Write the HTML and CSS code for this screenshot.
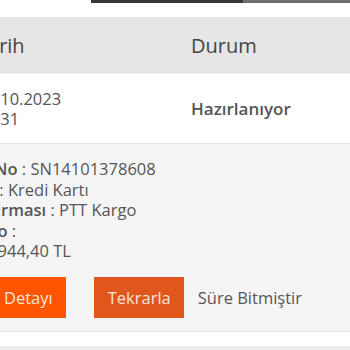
FILE: index.html
```html
<!DOCTYPE html>
<html lang="tr">
<head>
<meta charset="utf-8">
<link rel="stylesheet" href="styles.css">
</head>
<body>
<div class="topbar">
  <div class="tb-space"></div>
  <div class="tb-dark"></div>
  <div class="tb-grey"></div>
</div>
<div class="orders">
  <div class="head-row">
    <div class="cell c1">Tarih</div>
    <div class="cell c2">Durum</div>
  </div>
  <div class="data-row">
    <div class="cell c1 date">12.10.2023<br>14:31</div>
    <div class="cell c2 status">Hazırlanıyor</div>
  </div>
  <div class="detail-row">
    <div class="lines">
      <div class="line"><b>Sipariş No</b> : SN14101378608</div>
      <div class="line"><b>Ödeme</b> : Kredi Kartı</div>
      <div class="line"><b>Kargo Firması</b> : PTT Kargo</div>
      <div class="line"><b>Takip No</b> :</div>
      <div class="line"><b>Tutarı</b> : 944,40 TL</div>
    </div>
    <div class="actions">
      <span class="btn btn-detail">Detayı</span>
      <span class="btn btn-repeat">Tekrarla</span>
      <span class="expired">Süre Bitmiştir</span>
    </div>
  </div>
  <div class="spacer-row"></div>
  <div class="next-row"></div>
</div>
</body>
</html>
```
FILE: styles.css
```css
html, body {
  margin: 0;
  padding: 0;
  background: #ffffff;
  width: 350px;
  height: 350px;
  overflow: hidden;
  font-family: "Open Sans", "Noto Sans", sans-serif;
  color: #555555;
}
.topbar {
  display: flex;
  height: 3px;
}
.tb-space { width: 91px; }
.tb-dark { width: 152px; background: #383838; }
.tb-grey { flex: 1; background: #6e6e6e; }

.orders {
  margin-top: 14px;
  margin-left: -70px;
  width: 420px;
}
.head-row {
  display: flex;
  height: 56px;
  align-items: center;
  background: #e6e6e6;
  border-bottom: 1px solid #f2f2f2;
  font-size: 20px;
  color: #444444;
}
.cell.c1 {
  width: 261px;
  padding-left: 47px;
  box-sizing: border-box;
}
.cell.c2 { flex: 1; }
.data-row {
  display: flex;
  align-items: center;
  height: 69px;
  background: #ffffff;
  border-bottom: 1px solid #e6e6e6;
}
.date {
  font-size: 16.5px;
  line-height: 20px;
  color: #555555;
}
.status {
  font-size: 17px;
  font-weight: 600;
  color: #555555;
}
.detail-row {
  background: #f5f5f5;
  padding: 15px 0 15px 7px;
  height: 188px;
  box-sizing: border-box;
  border-bottom: 1px solid #e4e4e4;
}
.line {
  font-size: 16.5px;
  line-height: 20.5px;
  color: #555555;
}
.line b { font-weight: 600; }
.actions {
  display: flex;
  align-items: center;
  margin-top: 15px;
  padding-left: 53px;
}
.btn {
  font-size: 16.5px;
  line-height: 21px;
  padding: 10px 13px 10px 14px;
  color: #fbe4d6;
}
.btn-detail { background: #ff5500; margin-right: 28px; }
.btn-repeat { background: #e0561c; margin-right: 14px; }
.expired { font-size: 16.5px; color: #555555; }
.spacer-row { height: 14px; background: #ffffff; }
.next-row { height: 20px; background: #ececec; }
```
